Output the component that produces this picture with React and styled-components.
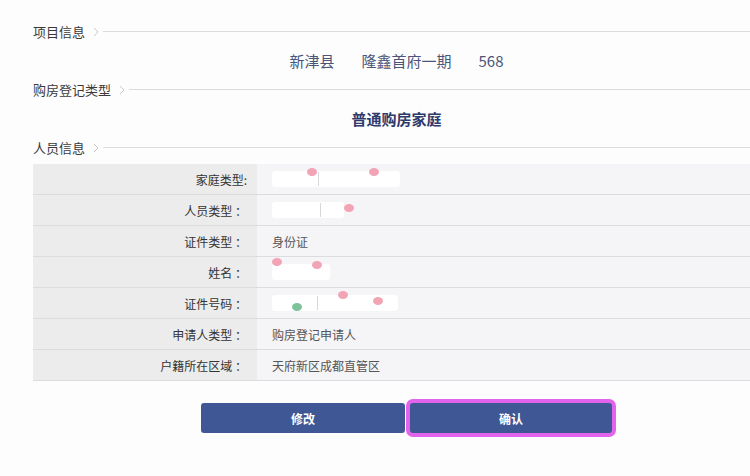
import React from "react";
import styled, { createGlobalStyle } from "styled-components";

const GlobalStyle = createGlobalStyle`
  html, body {
    margin: 0;
    padding: 0;
    background: #ffffff;
    font-family: "Noto Sans CJK SC", "Liberation Sans", sans-serif;
  }
`;

const Page = styled.div`
  width: 750px;
  height: 476px;
  overflow: hidden;
  padding: 17px 0 0 33px;
  box-sizing: border-box;
  background: #fdfdfd;
`;

const SectionHeader = styled.div`
  height: 29px;
  display: flex;
  align-items: center;
  font-size: 13px;
  color: #3a3a3a;
  & > svg {
    margin-left: 8px;
    flex: none;
  }
`;

const HeaderLine = styled.div`
  flex: 1;
  height: 1px;
  margin-left: 4px;
  background: #dcdcdc;
`;

const InfoRow = styled.div`
  height: 29px;
  display: flex;
  align-items: center;
  justify-content: center;
  gap: 27px;
  padding-left: 10px;
  font-size: 15px;
  color: ${(p) => (p.strong ? "#2e3a6c" : "#4b5479")};
  font-weight: ${(p) => (p.strong ? 700 : 400)};
`;

const Table = styled.div`
  margin-top: 2px;
  display: flex;
  flex-direction: column;
`;

const Row = styled.div`
  display: grid;
  grid-template-columns: 224px 1fr;
  height: 30px;
  border-bottom: 1px solid #dcdcde;
  box-shadow: inset 0 1px 0 #ffffff;
  font-size: 12px;
`;

const Label = styled.div`
  background: #ececec;
  display: flex;
  align-items: center;
  justify-content: flex-end;
  padding-right: 10px;
  color: #333;
  white-space: pre;
`;

const Value = styled.div`
  background: #f5f4f7;
  display: flex;
  align-items: center;
  padding-left: 15px;
  color: #555;
`;

const Redact = styled.div`
  position: relative;
  width: ${(p) => p.w}px;
  height: 16px;
  background: #ffffff;
  border-radius: 3px;
  filter: blur(0.7px);
`;

const Dot = styled.span`
  position: absolute;
  width: 10px;
  height: 8px;
  border-radius: 50%;
  background: ${(p) => p.c};
`;

const Tick = styled.span`
  position: absolute;
  top: 1px;
  width: 1px;
  height: 14px;
  background: #d8d8dc;
`;

const ButtonRow = styled.div`
  display: flex;
  gap: 5px;
  padding: 22px 0 0 168px;
`;

const Button = styled.button`
  width: ${(p) => p.w}px;
  height: 30px;
  border: none;
  border-radius: 3px;
  background: #3f5895;
  color: #ffffff;
  font-family: inherit;
  font-size: 12px;
  font-weight: 700;
  box-shadow: ${(p) => (p.focused ? "0 0 0 4px #e263ec" : "none")};
  cursor: pointer;
`;

const Chevron = () => (
  <svg width="6" height="10" viewBox="0 0 6 10">
    <path d="M1 1l4 4-4 4" fill="none" stroke="#c8c8c8" strokeWidth="1" />
  </svg>
);

const Header = ({ title }) => (
  <SectionHeader>
    {title}
    <Chevron />
    <HeaderLine />
  </SectionHeader>
);

const Masked = ({ w, dots = [], ticks = [] }) => (
  <Redact w={w}>
    {ticks.map((x) => (
      <Tick key={x} style={{ left: x }} />
    ))}
    {dots.map((d, i) => (
      <Dot key={i} c={d.c} style={{ left: d.x, top: d.y }} />
    ))}
  </Redact>
);

const pink = "#f2a3b4";
const green = "#7cc39a";

const rows = [
  {
    label: "家庭类型:",
    mask: { w: 128, ticks: [46], dots: [{ x: 35, y: -3, c: pink }, { x: 97, y: -3, c: pink }] },
  },
  { label: "人员类型 ：", mask: { w: 72, ticks: [48], dots: [{ x: 72, y: 2, c: pink }] } },
  { label: "证件类型 ：", value: "身份证" },
  {
    label: "姓名 ：",
    mask: { w: 58, dots: [{ x: 0, y: -6, c: pink }, { x: 40, y: -3, c: pink }] },
  },
  {
    label: "证件号码 ：",
    mask: {
      w: 126,
      ticks: [45],
      dots: [
        { x: 20, y: 8, c: green },
        { x: 66, y: -4, c: pink },
        { x: 101, y: 2, c: pink },
      ],
    },
  },
  { label: "申请人类型 ：", value: "购房登记申请人" },
  { label: "户籍所在区域 ：", value: "天府新区成都直管区" },
];

export default function App() {
  return (
    <>
      <GlobalStyle />
      <Page>
        <Header title="项目信息" />
        <InfoRow>
          <span>新津县</span>
          <span>隆鑫首府一期</span>
          <span>568</span>
        </InfoRow>
        <Header title="购房登记类型" />
        <InfoRow strong>普通购房家庭</InfoRow>
        <Header title="人员信息" />
        <Table>
          {rows.map((r) => (
            <Row key={r.label}>
              <Label>{r.label}</Label>
              <Value>{r.value ? r.value : <Masked {...r.mask} />}</Value>
            </Row>
          ))}
        </Table>
        <ButtonRow>
          <Button w={204}>修改</Button>
          <Button w={202} focused>
            确认
          </Button>
        </ButtonRow>
      </Page>
    </>
  );
}
